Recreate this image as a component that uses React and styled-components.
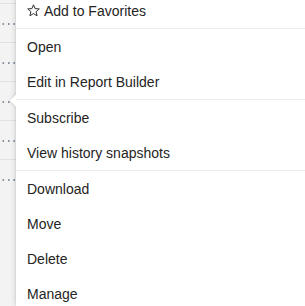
import React from "react";
import styled, { createGlobalStyle } from "styled-components";

const GlobalStyle = createGlobalStyle`
  html, body {
    margin: 0;
    padding: 0;
    overflow: hidden;
    background: #ffffff;
  }
`;

const groups = [
  [{ label: "Add to Favorites", star: true }],
  [{ label: "Open" }, { label: "Edit in Report Builder" }],
  [{ label: "Subscribe" }, { label: "View history snapshots" }],
  [{ label: "Download" }, { label: "Move" }, { label: "Delete" }, { label: "Manage" }],
];

const StarIcon = () => (
  <svg width="13" height="13" viewBox="0 0 13 13" fill="none">
    <path
      d="M6.5 0.8 L8.1 4.6 L12.3 4.9 L9.1 7.6 L10.1 11.8 L6.5 9.6 L2.9 11.8 L3.9 7.6 L0.7 4.9 L4.9 4.6 Z"
      stroke="#323130"
      strokeWidth="1"
      strokeLinejoin="round"
    />
  </svg>
);

const MoreIcon = () => (
  <svg width="16" height="4" viewBox="0 0 16 4">
    <rect x="2.5" y="1.2" width="1.6" height="1.6" fill="#6b7a8a" />
    <rect x="8" y="1.2" width="1.6" height="1.6" fill="#6b7a8a" />
    <rect x="13.4" y="1.2" width="1.6" height="1.6" fill="#6b7a8a" />
  </svg>
);

const App = () => {
  return (
    <>
      <GlobalStyle />
      <Page>
        <ListStrip>
          <ListRow $first />
          {[0, 1, 2, 3, 4].map((i) => (
            <ListRow key={i} $last={i === 4}>
              <MoreIcon />
            </ListRow>
          ))}
        </ListStrip>
        <Menu>
          <Beak />
          {groups.map((group, gi) => (
            <Group key={gi} $divider={gi > 0}>
              {group.map((item) => (
                <Item key={item.label}>
                  {item.star && <StarIcon />}
                  <span>{item.label}</span>
                </Item>
              ))}
            </Group>
          ))}
        </Menu>
      </Page>
    </>
  );
};

const Page = styled.div`
  display: flex;
  width: 305px;
  height: 306px;
  overflow: hidden;
  font-family: "Segoe UI", "Liberation Sans", Arial, sans-serif;
`;

const ListStrip = styled.div`
  width: 16px;
  flex-shrink: 0;
  background: #f3f3f3;
  overflow: hidden;
`;

const ListRow = styled.div`
  height: ${(p) => (p.$first ? "3px" : "38px")};
  border-bottom: ${(p) => (p.$last ? "none" : "1px solid #e1e1e1")};
  display: flex;
  align-items: center;
  svg {
    display: block;
    margin-top: 1px;
  }
`;

const Menu = styled.div`
  position: relative;
  z-index: 1;
  flex: 1;
  margin-top: -7px;
  background: #ffffff;
  box-shadow: 0 0 6px rgba(0, 0, 0, 0.18), 0 0 1.5px rgba(0, 0, 0, 0.1);
`;

const Beak = styled.div`
  position: absolute;
  left: -4.25px;
  top: 102.75px;
  width: 8.5px;
  height: 8.5px;
  background: #ffffff;
  transform: rotate(45deg);
  box-shadow: 0 0 4px rgba(0, 0, 0, 0.16);
  z-index: -1;
`;

const Group = styled.div`
  position: relative;
  background: #ffffff;
  border-top: ${(p) => (p.$divider ? "1px solid #edebe9" : "none")};
`;

const Item = styled.div`
  height: 35px;
  display: flex;
  align-items: center;
  gap: 4px;
  padding-left: 11px;
  font-size: 14px;
  color: #252423;
  white-space: nowrap;
  svg {
    display: block;
    flex-shrink: 0;
  }
`;

export default App;
